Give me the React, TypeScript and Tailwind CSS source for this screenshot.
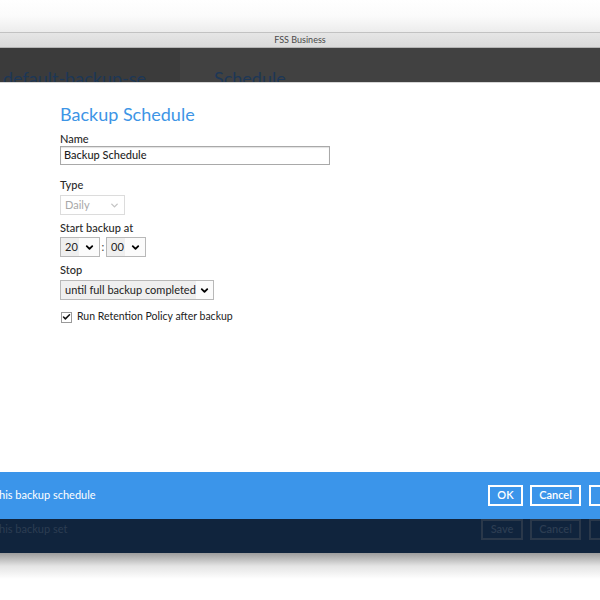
import { ChevronDown, Check } from "lucide-react";

function Select({
  value,
  width,
  disabled = false,
}: {
  value: string;
  width: string;
  disabled?: boolean;
}) {
  if (disabled) {
    return (
      <div
        className={`flex h-[20px] items-center justify-between border border-[#dcdcdc] bg-white pl-[4px] pr-[4px] text-[11px] text-[#a8a8a8] ${width}`}
      >
        <span>{value}</span>
        <ChevronDown size={11} strokeWidth={3} className="text-[#c4c4c4]" />
      </div>
    );
  }
  return (
    <div
      className={`flex h-[20px] items-stretch border border-[#b8b8b8] text-[11px] text-[#222] ${width}`}
    >
      <div className="flex flex-1 items-center whitespace-nowrap bg-[#efefef] pl-[4px]">{value}</div>
      <div className="flex w-[20px] items-center justify-center bg-[#fbfbfb]">
        <ChevronDown size={11} strokeWidth={4} className="text-black" />
      </div>
    </div>
  );
}

function Label({ children }: { children: React.ReactNode }) {
  return (
    <div className="h-[14px] text-[11px] leading-[14px] font-medium text-[#2a2a2a]">
      {children}
    </div>
  );
}

export default function App() {
  return (
    <div
      className="relative flex h-[600px] w-[600px] flex-col overflow-hidden bg-white"
      style={{ fontFamily: "Lato, 'Liberation Sans', sans-serif" }}
    >
      {/* desktop above window */}
      <div className="h-[32px] shrink-0 bg-gradient-to-b from-white via-[#fbfbfb] to-[#ececec]" />
      <div className="h-px shrink-0 bg-[#c2c2c2]" />

      {/* title bar */}
      <div className="flex h-[14px] shrink-0 items-center justify-center bg-gradient-to-b from-[#e6e6e6] to-[#dadada] text-[9px] text-[#4a4a4a]">
        FSS Business
      </div>
      <div className="h-px shrink-0 bg-[#b4b4b4]" />

      {/* dimmed app header */}
      <div className="flex h-[34px] shrink-0 overflow-hidden">
        <div className="w-[180px] shrink-0 whitespace-nowrap bg-[#3b3b3b] pl-[3px] pt-[21px] text-[18px] leading-none text-[#1d3756]">
          default-backup-se
        </div>
        <div className="flex-1 bg-[#414141] pl-[34px] pt-[21px] text-[18px] leading-none text-[#1d3756]">
          Schedule
        </div>
      </div>
      <div className="h-px shrink-0 bg-[#d6d6d6]" />

      {/* dialog */}
      <div className="flex h-[389px] shrink-0 flex-col bg-white pl-[60px] pt-[21px]">
        <div className="h-[20px] text-[18px] leading-[20px] text-[#3d95e6]">Backup Schedule</div>

        <div className="mt-[8px]">
          <Label>Name</Label>
        </div>
        <div className="flex h-[19px] w-[270px] items-center border border-[#a9a9a9] bg-white pl-[3px] text-[11px] font-medium text-[#1f1f1f] shadow-[inset_0_1px_1px_rgba(0,0,0,0.12)]">
          Backup Schedule
        </div>

        <div className="mt-[13px]">
          <Label>Type</Label>
        </div>
        <div className="mt-[3px]">
          <Select value="Daily" width="w-[65px]" disabled />
        </div>

        <div className="mt-[6px]">
          <Label>Start backup at</Label>
        </div>
        <div className="mt-[2px] flex items-center">
          <Select value="20" width="w-[40px]" />
          <span className="w-[6px] text-center text-[11px] text-[#444]">:</span>
          <Select value="00" width="w-[40px]" />
        </div>

        <div className="mt-[6px]">
          <Label>Stop</Label>
        </div>
        <div className="mt-[3px]">
          <Select value="until full backup completed" width="w-[154px]" />
        </div>

        <div className="mt-[10px] flex h-[14px] items-center gap-[5px] pl-[1px]">
          <div className="flex h-[11px] w-[11px] items-center justify-center border border-[#9a9a9a] bg-white">
            <Check size={10} strokeWidth={4} className="text-[#111]" />
          </div>
          <span className="text-[10.5px] text-[#222]">Run Retention Policy after backup</span>
        </div>
      </div>

      {/* dialog footer */}
      <div className="flex h-[47px] shrink-0 items-center bg-[#3b95ea] text-[11px] text-white">
        <span className="-ml-px">his backup schedule</span>
        <div className="-mr-[33px] ml-auto flex shrink-0 gap-[7px] font-semibold">
          <div className="flex h-[21px] w-[35px] items-center justify-center border-2 border-white">OK</div>
          <div className="flex h-[21px] w-[51px] items-center justify-center border-2 border-white">Cancel</div>
          <div className="ml-px flex h-[21px] w-[44px] items-center justify-center border-2 border-white">Help</div>
        </div>
      </div>

      {/* dimmed page footer */}
      <div className="flex h-[34px] shrink-0 items-start bg-[#10243d] text-[11px] text-[#2c3d52]">
        <div className="flex h-[21px] items-center">
          <span className="-ml-px">his backup set</span>
        </div>
        <div className="-mr-[33px] ml-auto flex shrink-0 gap-[7px] font-semibold">
          <div className="flex h-[21px] w-[42px] items-center justify-center border-2 border-[#2a384a]">Save</div>
          <div className="flex h-[21px] w-[51px] items-center justify-center border-2 border-[#2a384a]">Cancel</div>
          <div className="ml-px flex h-[21px] w-[44px] items-center justify-center border-2 border-[#2a384a]">Help</div>
        </div>
      </div>

      {/* window shadow */}
      <div className="h-[26px] shrink-0 bg-gradient-to-b from-[#9c9c9c] via-[#e4e4e4] to-white" />
      <div className="flex-1 bg-white" />
    </div>
  );
}
